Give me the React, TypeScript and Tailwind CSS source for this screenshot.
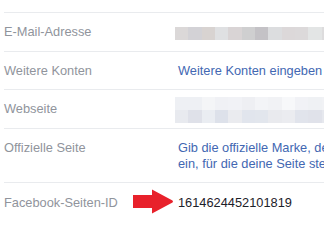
const emailBlocks = [
  "#dbd8d8", "#d3d2d6", "#d8d3d1", "#dfe0e2", "#d9d4d5", "#cfcfd0",
  "#c4c2c6", "#dcdddf", "#dcd8d9", "#dcd9da", "#e3e5e5", "#dddcdd",
];

const webTop = [
  "#eef0f4", "#eef0f4", "#f4f5f7", "#f0f1f5", "#f1f2f6", "#eeeff3",
  "#f3f4f7", "#f1f2f5", "#f7f8fa", "#f1f2f6", "#eff1f4", "#f1f2f5",
];
const webBottom = [
  "#e8eaef", "#dfe1e9", "#eaedf2", "#dde1ea", "#eaebef", "#e1e5ed",
  "#e2e6ed", "#e9eaee", "#ebecf0", "#e1e4ec", "#e0e2ea", "#e6e8ee",
];

function Blocks({ colors }: { colors: string[] }) {
  return (
    <div className="flex">
      {colors.map((c, i) => (
        <div key={i} className="h-[13px] w-[13.33px] shrink-0" style={{ backgroundColor: c }} />
      ))}
    </div>
  );
}

function Label({ children }: { children: React.ReactNode }) {
  return <div className="w-[174px] shrink-0 text-[#90949c]">{children}</div>;
}

export default function App() {
  return (
    <div
      className="relative h-[234px] w-[324px] overflow-hidden bg-white text-[12.8px] leading-[16px]"
      style={{ fontFamily: '"Liberation Sans", Arial, sans-serif' }}
    >
      <div className="pl-[4px] pt-[12px]">
        <div className="flex h-[39px] items-center border-t border-[#e9ebee]">
          <Label>E-Mail-Adresse</Label>
          <div className="-ml-[3px] pt-[2px]">
            <Blocks colors={emailBlocks} />
          </div>
        </div>

        <div className="flex h-[38px] items-center border-t border-[#e9ebee]">
          <Label>Weitere Konten</Label>
          <div className="whitespace-nowrap text-[#4267b2]">Weitere Konten eingeben</div>
        </div>

        <div className="flex h-[39px] items-center border-t border-[#e9ebee]">
          <Label>Webseite</Label>
          <div className="-ml-[3px] pt-[2px]">
            <Blocks colors={webTop} />
            <Blocks colors={webBottom} />
          </div>
        </div>

        <div className="flex h-[54px] items-start border-t border-[#e9ebee] pt-[11px]">
          <Label>Offizielle Seite</Label>
          <div className="whitespace-nowrap text-[#4267b2]">
            Gib die offizielle Marke, den Namen oder die Person
            <br />
            ein, für die deine Seite steht.
          </div>
        </div>

        <div className="flex h-[40px] items-center border-t border-[#e9ebee]">
          <Label>Facebook-Seiten-ID</Label>
          <div className="text-[#1d2129]">1614624452101819</div>
        </div>
      </div>

      <svg
        className="absolute left-[133px] top-[189px]"
        width="41"
        height="25"
        viewBox="0 0 41 25"
      >
        <path
          d="M0 6 H19 V0.5 L39.5 11.5 Q40.5 12.5 39.5 13.5 L19 24.5 V19 H0 Z"
          fill="#e8212b"
        />
      </svg>
    </div>
  );
}
